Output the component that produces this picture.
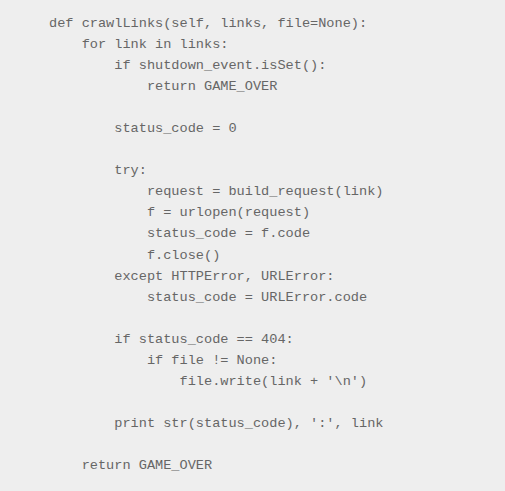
const code = `def crawlLinks(self, links, file=None):
    for link in links:
        if shutdown_event.isSet():
            return GAME_OVER

        status_code = 0

        try:
            request = build_request(link)
            f = urlopen(request)
            status_code = f.code
            f.close()
        except HTTPError, URLError:
            status_code = URLError.code

        if status_code == 404:
            if file != None:
                file.write(link + '\\n')

        print str(status_code), ':', link

    return GAME_OVER`;

export default function App() {
  return (
    <div className="h-[491px] w-[505px] overflow-hidden bg-[#eeeeee]">
      <pre className="pl-[49px] pt-[13px] font-['Courier_New','Liberation_Mono',monospace] text-[13.6px] leading-[21.05px] text-[#666666]">
        {code}
      </pre>
    </div>
  );
}
